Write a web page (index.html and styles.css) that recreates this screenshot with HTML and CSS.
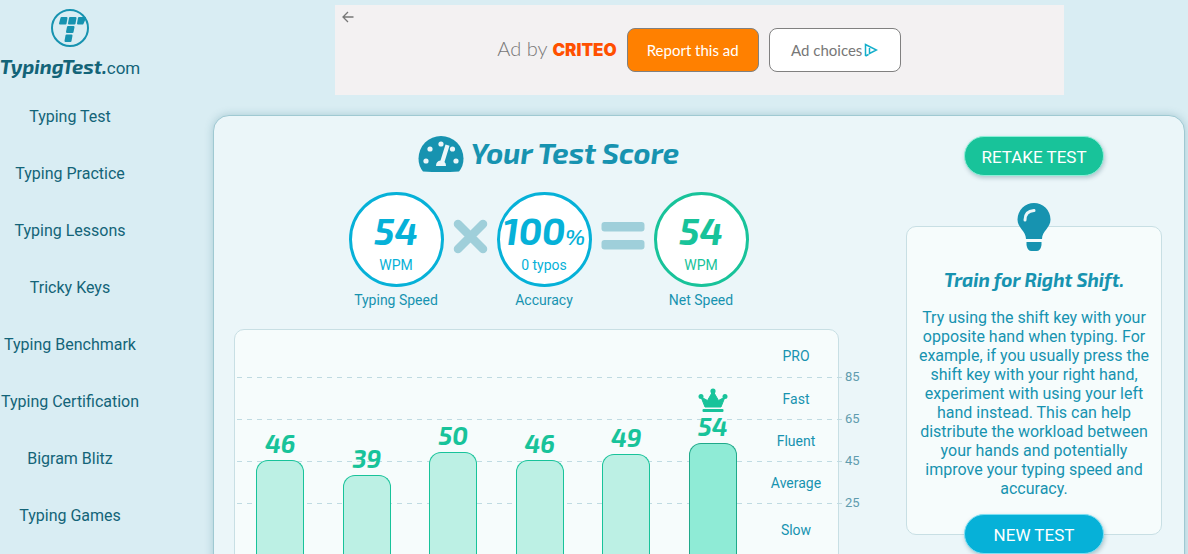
FILE: index.html
```html
<!DOCTYPE html>
<html lang="en">
<head>
<meta charset="utf-8">
<title>TypingTest.com</title>
<link rel="stylesheet" href="styles.css">
</head>
<body>
<div class="page">
  <aside class="sidebar">
    <a class="brand" href="#">
      <svg class="brand-mark" viewBox="0 0 38 38" aria-hidden="true">
        <circle cx="19" cy="19" r="18" fill="none" stroke="#1793b0" stroke-width="2"/>
        <g fill="#1793b0" stroke="#1793b0" stroke-width="2" stroke-linejoin="round">
          <path d="M10.500 9h5l-1 5.500H9z"/><path d="M19 9h5.500l-1 5.500h-5.500z"/><path d="M28 9h6l-2.500 5.500h-4.500z"/>
          <path d="M17 18h5.500l-1 5h-5.500z"/><path d="M15.500 26.500h5l-1 5.500h-5z"/>
        </g>
      </svg>
      <span class="brand-name"><strong>TypingTest.</strong>com</span>
    </a>
    <nav class="menu">
      <a href="#">Typing Test</a>
      <a href="#">Typing Practice</a>
      <a href="#">Typing Lessons</a>
      <a href="#">Tricky Keys</a>
      <a href="#">Typing Benchmark</a>
      <a href="#">Typing Certification</a>
      <a href="#">Bigram Blitz</a>
      <a href="#">Typing Games</a>
    </nav>
  </aside>

  <main class="main">
    <section class="ad">
      <button class="ad-back" aria-label="Back">
        <svg viewBox="0 0 12 12" width="12" height="12"><path d="M11.500 6H1.500M6 1L1 6l5 5" fill="none" stroke="#777" stroke-width="1.300"/></svg>
      </button>
      <p class="ad-by">Ad by <strong>CRITEO</strong></p>
      <button class="ad-button ad-report">Report this ad</button>
      <button class="ad-button">Ad choices
        <svg viewBox="0 0 14 14" width="14" height="14" aria-hidden="true"><path d="M1.500 13V1.500L12.500 7 5.500 10.500V5M1.500 13l3-1.500" fill="none" stroke="#12aecb" stroke-width="1.500"/></svg>
      </button>
    </section>

    <section class="card">
      <div class="results">
        <h1 class="title">
          <svg viewBox="0 0 46 36" width="46" height="36" aria-hidden="true">
            <path d="M5 35.500Q0.500 30 0.500 22.500A22.500 22.500 0 0 1 45.500 22.500Q45.500 30 41 35.500Q23 36.500 5 35.500z" fill="#1793b0"/>
            <g fill="#ebf6f9"><circle cx="8" cy="25" r="2.600"/><circle cx="12" cy="13" r="2.600"/><circle cx="23" cy="8" r="2.600"/><circle cx="34.500" cy="13" r="2.600"/><circle cx="38" cy="25" r="2.600"/>
            <path d="M27.500 8.500l4 1.200-5 16.300q1.500 1 1.500 4h-10q0-5 4.500-5.500z"/></g>
          </svg>
          <span>Your Test Score</span>
        </h1>

        <div class="metrics">
          <div class="metric">
            <div class="dial"><span class="value">54</span><span class="unit">WPM</span></div>
            <span class="caption">Typing Speed</span>
          </div>
          <svg class="operator" viewBox="0 0 35 35" width="35" height="35" aria-label="times"><path d="M5 5l25 25M30 5L5 30" stroke="#9fcfda" stroke-width="8.500" stroke-linecap="round"/></svg>
          <div class="metric">
            <div class="dial"><span class="value">100<small>%</small></span><span class="unit">0 typos</span></div>
            <span class="caption">Accuracy</span>
          </div>
          <svg class="operator" viewBox="0 0 44 35" width="44" height="35" aria-label="equals"><g fill="#9fcfda"><rect x=".5" y="3" width="43" height="9.500" rx="3"/><rect x=".5" y="21" width="43" height="9.500" rx="3"/></g></svg>
          <div class="metric metric-net">
            <div class="dial"><span class="value">54</span><span class="unit">WPM</span></div>
            <span class="caption">Net Speed</span>
          </div>
        </div>

        <div class="chart">
          <div class="frame"></div>
          <div class="line band-pro"></div><div class="line band-fast"></div><div class="line band-fluent"></div><div class="line band-average"></div>
          <div class="bars">
            <div class="column"><span class="score">46</span><div class="bar" style="height:42.3%"></div></div>
            <div class="column"><span class="score">39</span><div class="bar" style="height:35.7%"></div></div>
            <div class="column"><span class="score">50</span><div class="bar" style="height:46%"></div></div>
            <div class="column"><span class="score">46</span><div class="bar" style="height:42.3%"></div></div>
            <div class="column"><span class="score">49</span><div class="bar" style="height:45.1%"></div></div>
            <div class="column">
              <svg class="crown" viewBox="0 0 30 24" width="30" height="24" aria-hidden="true"><g fill="#18c39a"><path d="M7 19L3 9l6.500 3.500L15 3l5.500 9.500L27 9l-4 10z" stroke="#18c39a" stroke-linejoin="round"/><circle cx="3" cy="8.500" r="2.500"/><circle cx="15" cy="3" r="2.600"/><circle cx="27" cy="8.500" r="2.500"/><rect x="4.500" y="21" width="21" height="3" rx="1"/></g></svg>
              <span class="score">54</span><div class="bar bar-current" style="height:49.8%"></div>
            </div>
          </div>
          <span class="level band-pro">PRO</span><span class="level band-fast">Fast</span><span class="level band-fluent">Fluent</span><span class="level band-average">Average</span><span class="level band-slow">Slow</span>
          <span class="tick band-pro">85</span><span class="tick band-fast">65</span><span class="tick band-fluent">45</span><span class="tick band-average">25</span>
        </div>
      </div>

      <div class="side">
        <button class="pill">RETAKE TEST</button>
        <article class="tip">
          <svg class="bulb" viewBox="0 0 34 48" width="34" height="48" aria-hidden="true">
            <path d="M9 36C9 28 .5 25 .5 16.500a16.500 16.500 0 0 1 33 0C33.500 25 25 28 25 36z" fill="#1793b0"/>
            <path d="M9.500 39h15v3q-1 6-5 6h-5q-4 0-5-6z" fill="#1793b0"/>
            <path d="M8 17q0-9 9-9.500" fill="none" stroke="#ebf6f9" stroke-width="3" stroke-linecap="round"/>
          </svg>
          <h2>Train for Right Shift.</h2>
          <p>Try using the shift key with your opposite hand when typing. For example, if you usually press the shift key with your right hand, experiment with using your left hand instead. This can help distribute the workload between your hands and potentially improve your typing speed and accuracy.</p>
        </article>
        <button class="pill pill-new">NEW TEST</button>
      </div>
    </section>
  </main>
</div>
</body>
</html>
```

FILE: styles.css
```css
* { box-sizing: border-box; }

body {
  margin: 0;
  overflow: hidden;
  background: #d9edf3;
  color: #1793b0;
  font-family: Roboto, "Liberation Sans", sans-serif;
}

h1, h2, p { margin: 0; }
a { color: #136478; text-decoration: none; }
button { font: inherit; cursor: pointer; }

.page {
  display: grid;
  grid-template-columns: 140px 1fr;
  column-gap: 73px;
  padding-right: 3px;
  height: 100vh;
}

.brand {
  display: flex;
  flex-direction: column;
  align-items: center;
  padding-top: 9px;
}
.brand-mark { width: 38px; height: 38px; }
.brand-name {
  margin-top: 7px;
  font-size: 17px;
  line-height: 24px;
  white-space: nowrap;
}
.brand-name strong {
  font-family: "Exo 2", "Noto Sans", sans-serif;
  font-size: 20px;
  font-style: italic;
}

.menu {
  display: grid;
  gap: 33px;
  padding-top: 25px;
  text-align: center;
  line-height: 24px;
  white-space: nowrap;
}

.main {
  display: flex;
  flex-direction: column;
  gap: 20px;
  padding-top: 5px;
  min-width: 0;
}

.ad {
  position: relative;
  display: flex;
  align-items: center;
  justify-content: center;
  gap: 10px;
  align-self: center;
  flex: none;
  width: 75%;
  height: 90px;
  background: #f3f1f2;
  color: #777;
  font-family: "Century Gothic", Lato, sans-serif;
}
.ad-back {
  position: absolute;
  top: 6px;
  left: 7px;
  display: flex;
  padding: 0;
  border: 0;
  background: none;
}
.ad-by { font-size: 20px; font-weight: 300; line-height: 24px; padding-bottom: 2px; }
.ad-by strong { color: #ff5000; font-family: Inter, sans-serif; font-size: 17px; font-weight: 900; }
.ad-button {
  display: flex;
  align-items: center;
  justify-content: center;
  gap: 2px;
  width: 132px;
  height: 44px;
  padding: 0;
  border: 1px solid #808080;
  border-radius: 8px;
  background: #fff;
  color: #777;
  font-size: 15px;
}
.ad-report { background: #ff8000; color: #fff; }

.card {
  display: grid;
  grid-template-columns: minmax(0, 629px) 256px;
  justify-content: space-between;
  align-items: start;
  height: 640px;
  flex: none;
  padding: 20px 22px 0 20px;
  border: 1px solid #9fc9d2;
  border-radius: 16px;
  background: #ebf6f9;
  box-shadow: 0 0 8px rgba(23, 100, 120, .25);
}

.title {
  display: flex;
  align-items: center;
  justify-content: center;
  gap: 7px;
  height: 36px;
  font-family: "Exo 2", "Noto Sans", sans-serif;
  font-size: 29px;
  font-style: italic;
  white-space: nowrap;
}
.title span { padding-bottom: 3px; }

.metrics {
  display: flex;
  justify-content: center;
  gap: 9px;
  margin-top: 20px;
}
.metric {
  width: 95px;
  color: #06b1d8;
  text-align: center;
}
.metric-net { color: #18c39a; }
.dial {
  display: flex;
  flex-direction: column;
  align-items: center;
  gap: 4px;
  height: 95px;
  padding-top: 14px;
  border: 3px solid;
  border-radius: 50%;
  background: #fff;
}
.value {
  font-family: "Exo 2", "Noto Sans", sans-serif;
  font-size: 37px;
  font-style: italic;
  font-weight: 700;
  line-height: 42px;
  white-space: nowrap;
}
.value small { font-size: 22px; font-weight: 600; line-height: 22px; }
.unit { font-size: 14px; line-height: 20px; }
.caption {
  display: block;
  margin-top: 3px;
  color: #1793b0;
  font-size: 14px;
  line-height: 20px;
}
.operator { margin-top: 27px; align-self: flex-start; }

.chart {
  display: grid;
  grid-template-columns: 1fr 83px 24px;
  grid-template-rows: 49px 42px 42px 42px 52px;
  margin-top: 19px;
}
.frame {
  grid-area: 1 / 1 / 6 / 3;
  margin-bottom: -24px;
  border: 1px solid #c8dfe4;
  border-radius: 10px;
  background: #f6fcfc;
}
.band-pro { grid-row: 1; }
.band-fast { grid-row: 2; }
.band-fluent { grid-row: 3; }
.band-average { grid-row: 4; }
.band-slow { grid-row: 5; }
.line {
  grid-column: 1 / 4;
  align-self: end;
  height: 1px;
  margin: 0 18px 0 3px;
  background: repeating-linear-gradient(90deg, #c0dbe2 0 5px, transparent 5px 10px);
}
.bars {
  grid-area: 1 / 1 / 6 / 2;
  display: grid;
  grid-template-columns: repeat(6, 1fr);
  padding-left: 3px;
}
.column {
  display: flex;
  flex-direction: column;
  align-items: center;
  justify-content: flex-end;
}
.bar {
  flex: none;
  width: 48px;
  border: 1px solid #18c39a;
  border-bottom: 0;
  border-radius: 12px 12px 0 0;
  background: #bcf0e4;
}
.bar-current { border-color: #20a98a; background: #8febd6; }
.score {
  padding-bottom: 3px;
  color: #18c39a;
  font-family: "Exo 2", "Noto Sans", sans-serif;
  font-size: 25px;
  font-style: italic;
  font-weight: 700;
  line-height: 28px;
}
.level {
  grid-column: 2;
  place-self: center;
  padding: 0 3px 1px 0;
  font-size: 14px;
}
.level.band-pro { padding-top: 6px; }
.tick {
  grid-column: 3;
  align-self: end;
  margin-bottom: -8px;
  padding-left: 6px;
  color: #5f9cae;
  font-size: 13px;
  line-height: 18px;
}

.side {
  display: flex;
  flex-direction: column;
  align-items: center;
}
.pill {
  position: relative;
  width: 140px;
  height: 40px;
  padding: 2px 0 0;
  border: 1px solid #8cf0d7;
  border-radius: 20px;
  background: #18c39a;
  box-shadow: 1px 2px 4px rgba(0, 60, 80, .25);
  color: #fff;
  font-size: 17px;
}
.pill-new { margin-top: -21px; border-color: #7ddff3; background: #06b1d8; }
.tip {
  display: flex;
  flex-direction: column;
  align-items: center;
  width: 100%;
  margin-top: 50px;
  padding: 0 10px 36px;
  border: 1px solid #c8dfe4;
  border-radius: 10px;
  background: #f6fcfc;
  text-align: center;
}
.bulb { margin-top: -24px; }
.tip h2 {
  margin-top: 15px;
  font-family: "Exo 2", "Noto Sans", sans-serif;
  font-size: 19px;
  font-style: italic;
  line-height: 28px;
  white-space: nowrap;
}
.tip p { margin-top: 14px; font-size: 16px; line-height: 19px; }
```
